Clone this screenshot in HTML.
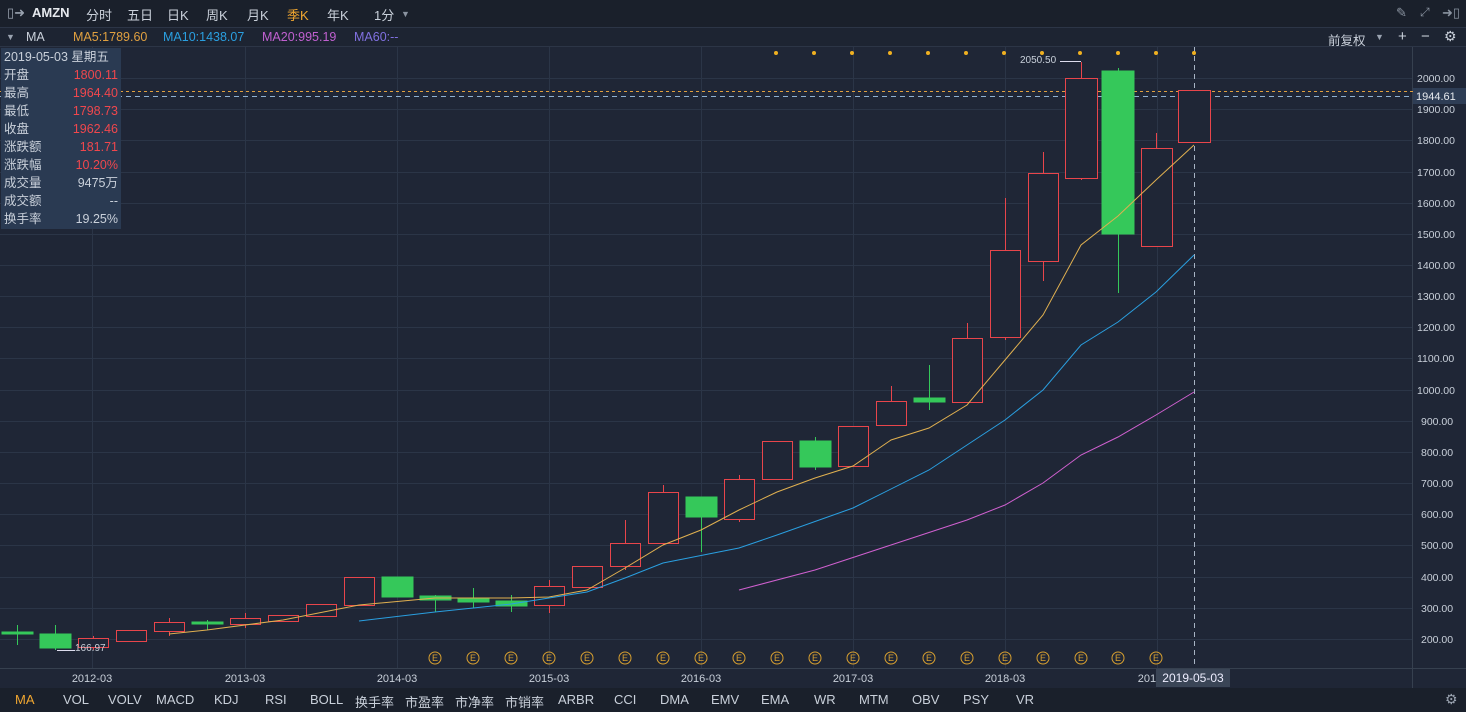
<!DOCTYPE html>
<html><head><meta charset="utf-8"><style>
*{margin:0;padding:0;box-sizing:border-box}
body{width:1466px;height:712px;background:#1f2636;font-family:"Liberation Sans","Noto Sans CJK SC",sans-serif;overflow:hidden;position:relative;color:#c9d0da}
.top{position:absolute;left:0;top:0;width:1466px;height:27px;background:#1a202b;font-size:13px}
.top span{position:absolute;top:5px}
.mabar{position:absolute;left:0;top:27px;width:1466px;height:20px;background:#1d2432;border-top:1px solid #2c3546;border-bottom:1px solid #2c3546;font-size:12.5px}
.mabar span{position:absolute;top:2px}
.info{position:absolute;left:1px;top:48px;width:120px;height:181px;background:#2a3a52;font-size:12.5px}
.info div{height:18px;line-height:18px;position:relative;padding-left:3px;color:#c9d0da}
.info b{font-weight:normal;position:absolute;right:3px;top:0}
.r{color:#f0474d}
.bot{position:absolute;left:0;top:688px;width:1466px;height:24px;background:#1a202b;font-size:13px}
.bot span{position:absolute;top:4px}
</style></head><body>
<div class="top">
<span style="left:7px;color:#9aa3b0">▯➜</span>
<span style="left:32px;font-weight:bold;color:#e6e9ee">AMZN</span>
<span style="left:86px">分时</span><span style="left:127px">五日</span><span style="left:167px">日K</span><span style="left:206px">周K</span><span style="left:247px">月K</span><span style="left:287px;color:#f0a630">季K</span><span style="left:327px">年K</span><span style="left:374px">1分</span><span style="left:401px;font-size:9px;top:9px;color:#8a93a0">▼</span>
<span style="left:1396px;color:#8a93a0">✎</span><span style="left:1420px;color:#8a93a0;font-size:12px">⤢</span><span style="left:1442px;color:#8a93a0">➜▯</span>
</div>
<div class="mabar">
<span style="left:6px;font-size:9px;top:4px;color:#9aa3b0">▼</span>
<span style="left:26px">MA</span>
<span style="left:73px;color:#e0a040">MA5:1789.60</span>
<span style="left:163px;color:#2a9fe0">MA10:1438.07</span>
<span style="left:262px;color:#c060d0">MA20:995.19</span>
<span style="left:354px;color:#8070e0">MA60:--</span>
<span style="left:1328px">前复权</span><span style="left:1375px;font-size:9px;top:4px;color:#9aa3b0">▼</span>
<span style="left:1398px;font-size:15px;top:0">+</span><span style="left:1421px;font-size:15px;top:0">−</span><span style="left:1444px;font-size:14px;top:0">⚙</span>
</div>
<svg style="position:absolute;left:0;top:47px" width="1466" height="641" viewBox="0 47 1466 641">
<g stroke="#2b3547" stroke-width="1">
<line x1="0" y1="78.5" x2="1412" y2="78.5"/><line x1="0" y1="109.5" x2="1412" y2="109.5"/><line x1="0" y1="140.5" x2="1412" y2="140.5"/><line x1="0" y1="172.5" x2="1412" y2="172.5"/><line x1="0" y1="203.5" x2="1412" y2="203.5"/><line x1="0" y1="234.5" x2="1412" y2="234.5"/><line x1="0" y1="265.5" x2="1412" y2="265.5"/><line x1="0" y1="296.5" x2="1412" y2="296.5"/><line x1="0" y1="327.5" x2="1412" y2="327.5"/><line x1="0" y1="358.5" x2="1412" y2="358.5"/><line x1="0" y1="390.5" x2="1412" y2="390.5"/><line x1="0" y1="421.5" x2="1412" y2="421.5"/><line x1="0" y1="452.5" x2="1412" y2="452.5"/><line x1="0" y1="483.5" x2="1412" y2="483.5"/><line x1="0" y1="514.5" x2="1412" y2="514.5"/><line x1="0" y1="545.5" x2="1412" y2="545.5"/><line x1="0" y1="577.5" x2="1412" y2="577.5"/><line x1="0" y1="608.5" x2="1412" y2="608.5"/><line x1="0" y1="639.5" x2="1412" y2="639.5"/>
<line x1="92.5" y1="47" x2="92.5" y2="668"/><line x1="245.5" y1="47" x2="245.5" y2="668"/><line x1="397.5" y1="47" x2="397.5" y2="668"/><line x1="549.5" y1="47" x2="549.5" y2="668"/><line x1="701.5" y1="47" x2="701.5" y2="668"/><line x1="853.5" y1="47" x2="853.5" y2="668"/><line x1="1005.5" y1="47" x2="1005.5" y2="668"/><line x1="1157.5" y1="47" x2="1157.5" y2="668"/>
<line x1="0" y1="668.5" x2="1466" y2="668.5" stroke="#36404f"/>
<line x1="1412.5" y1="47" x2="1412.5" y2="688" stroke="#36404f"/>
</g>
<line x1="0" y1="91.5" x2="1466" y2="91.5" stroke="#e0a040" stroke-dasharray="3,3"/>
<line x1="0" y1="96.5" x2="1412" y2="96.5" stroke="#8fb0d0" stroke-dasharray="5,4"/>
<line x1="1194.5" y1="47" x2="1194.5" y2="668" stroke="#a8b4c4" stroke-dasharray="5,4"/>
<g stroke="#e8454b" fill="#1f2636" stroke-width="1">
<line x1="93.5" y1="636" x2="93.5" y2="650"/><rect x="78.5" y="638.5" width="30" height="9"/>
<rect x="116.5" y="630.5" width="30" height="11"/>
<line x1="169.5" y1="618" x2="169.5" y2="636"/><rect x="154.5" y="622.5" width="30" height="9"/>
<line x1="245.5" y1="613" x2="245.5" y2="628"/><rect x="230.5" y="618.5" width="30" height="6"/>
<rect x="268.5" y="615.5" width="30" height="6"/>
<rect x="306.5" y="604.5" width="30" height="12"/>
<rect x="344.5" y="577.5" width="30" height="28"/>
<line x1="549.5" y1="580" x2="549.5" y2="613"/><rect x="534.5" y="586.5" width="30" height="19"/>
<rect x="572.5" y="566.5" width="30" height="21"/>
<line x1="625.5" y1="520" x2="625.5" y2="570"/><rect x="610.5" y="543.5" width="30" height="23"/>
<line x1="663.5" y1="485" x2="663.5" y2="545"/><rect x="648.5" y="492.5" width="30" height="51"/>
<line x1="739.5" y1="475" x2="739.5" y2="522"/><rect x="724.5" y="479.5" width="30" height="40"/>
<rect x="762.5" y="441.5" width="30" height="38"/>
<rect x="838.5" y="426.5" width="30" height="40"/>
<line x1="891.5" y1="386" x2="891.5" y2="401"/><rect x="876.5" y="401.5" width="30" height="24"/>
<line x1="967.5" y1="323" x2="967.5" y2="338"/><rect x="952.5" y="338.5" width="30" height="64"/>
<line x1="1005.5" y1="198" x2="1005.5" y2="340"/><rect x="990.5" y="250.5" width="30" height="87"/>
<line x1="1043.5" y1="152" x2="1043.5" y2="281"/><rect x="1028.5" y="173.5" width="30" height="88"/>
<line x1="1081.5" y1="62" x2="1081.5" y2="180"/><rect x="1065.5" y="78.5" width="32" height="100"/>
<line x1="1156.5" y1="133" x2="1156.5" y2="148"/><rect x="1141.5" y="148.5" width="31" height="98"/>
<rect x="1178.5" y="90.5" width="32" height="52"/>
</g>
<g fill="#35c85a" stroke="#35c85a">
<line x1="17.5" y1="625" x2="17.5" y2="645"/><rect x="2" y="632" width="31" height="2"/>
<line x1="55.5" y1="625" x2="55.5" y2="650"/><rect x="40" y="634" width="31" height="14"/>
<line x1="207.5" y1="620" x2="207.5" y2="630"/><rect x="192" y="622" width="31" height="2"/>
<rect x="382" y="577" width="31" height="20"/>
<line x1="435.5" y1="595" x2="435.5" y2="612"/><rect x="420" y="596" width="31" height="4"/>
<line x1="473.5" y1="588" x2="473.5" y2="608"/><rect x="458" y="599" width="31" height="3"/>
<line x1="511.5" y1="595" x2="511.5" y2="612"/><rect x="496" y="601" width="31" height="5"/>
<line x1="701.5" y1="517" x2="701.5" y2="552"/><rect x="686" y="497" width="31" height="20"/>
<line x1="815.5" y1="437" x2="815.5" y2="470"/><rect x="800" y="441" width="31" height="26"/>
<line x1="929.5" y1="365" x2="929.5" y2="410"/><rect x="914" y="398" width="31" height="4"/>
<line x1="1118.5" y1="68" x2="1118.5" y2="293"/><rect x="1102" y="71" width="32" height="163"/>
</g>
<polyline fill="none" stroke="#e0b050" stroke-width="1" points="169,634 207,630 283,620 359,605 435,598 511,598 549,597 587,590 625,568 663,545 701,530 739,510 777,492 815,478 853,466 891,440 929,428 967,405 1005,360 1043,315 1081,245 1118,216 1156,180 1194,145"/>
<polyline fill="none" stroke="#2a9fe0" stroke-width="1" points="359,621 435,612 511,604 587,592 625,578 663,563 739,548 777,535 853,508 929,470 1005,420 1043,390 1081,345 1118,322 1156,292 1194,255"/>
<polyline fill="none" stroke="#d060d0" stroke-width="1" points="739,590 815,570 891,545 967,520 1005,505 1043,483 1081,455 1118,437 1156,415 1194,392"/>
<g fill="#f0b020"><circle cx="776" cy="53" r="2"/><circle cx="814" cy="53" r="2"/><circle cx="852" cy="53" r="2"/><circle cx="890" cy="53" r="2"/><circle cx="928" cy="53" r="2"/><circle cx="966" cy="53" r="2"/><circle cx="1004" cy="53" r="2"/><circle cx="1042" cy="53" r="2"/><circle cx="1080" cy="53" r="2"/><circle cx="1118" cy="53" r="2"/><circle cx="1156" cy="53" r="2"/><circle cx="1194" cy="53" r="2"/></g>
<g fill="none" stroke="#d8a030">
<circle cx="435" cy="658" r="6"/><circle cx="473" cy="658" r="6"/><circle cx="511" cy="658" r="6"/><circle cx="549" cy="658" r="6"/><circle cx="587" cy="658" r="6"/><circle cx="625" cy="658" r="6"/><circle cx="663" cy="658" r="6"/><circle cx="701" cy="658" r="6"/><circle cx="739" cy="658" r="6"/><circle cx="777" cy="658" r="6"/><circle cx="815" cy="658" r="6"/><circle cx="853" cy="658" r="6"/><circle cx="891" cy="658" r="6"/><circle cx="929" cy="658" r="6"/><circle cx="967" cy="658" r="6"/><circle cx="1005" cy="658" r="6"/><circle cx="1043" cy="658" r="6"/><circle cx="1081" cy="658" r="6"/><circle cx="1118" cy="658" r="6"/><circle cx="1156" cy="658" r="6"/>
</g>
<g fill="#d8a030" font-size="9" font-family="Liberation Sans" text-anchor="middle">
<text x="435" y="661">E</text><text x="473" y="661">E</text><text x="511" y="661">E</text><text x="549" y="661">E</text><text x="587" y="661">E</text><text x="625" y="661">E</text><text x="663" y="661">E</text><text x="701" y="661">E</text><text x="739" y="661">E</text><text x="777" y="661">E</text><text x="815" y="661">E</text><text x="853" y="661">E</text><text x="891" y="661">E</text><text x="929" y="661">E</text><text x="967" y="661">E</text><text x="1005" y="661">E</text><text x="1043" y="661">E</text><text x="1081" y="661">E</text><text x="1118" y="661">E</text><text x="1156" y="661">E</text>
</g>
<line x1="1060" y1="61.5" x2="1081" y2="61.5" stroke="#dde"/>
<text x="1020" y="63" fill="#c9d0da" font-size="10" font-family="Liberation Sans">2050.50</text>
<line x1="57" y1="650.5" x2="75" y2="650.5" stroke="#dde"/>
<text x="75" y="651" fill="#c9d0da" font-size="10" font-family="Liberation Sans">166.97</text>
<g fill="#c9d0da" font-size="10.5" font-family="Liberation Sans">
<text x="1417" y="82">2000.00</text><text x="1417" y="113">1900.00</text><text x="1417" y="144">1800.00</text><text x="1417" y="176">1700.00</text><text x="1417" y="207">1600.00</text><text x="1417" y="238">1500.00</text><text x="1417" y="269">1400.00</text><text x="1417" y="300">1300.00</text><text x="1417" y="331">1200.00</text><text x="1417" y="362">1100.00</text><text x="1417" y="394">1000.00</text><text x="1421" y="425">900.00</text><text x="1421" y="456">800.00</text><text x="1421" y="487">700.00</text><text x="1421" y="518">600.00</text><text x="1421" y="549">500.00</text><text x="1421" y="581">400.00</text><text x="1421" y="612">300.00</text><text x="1421" y="643">200.00</text>
</g>
<rect x="1413" y="88" width="53" height="16" fill="#2e3d55"/>
<text x="1416" y="100" fill="#e6e9ee" font-size="11" font-family="Liberation Sans">1944.61</text>
<g fill="#c9d0da" font-size="11" font-family="Liberation Sans" text-anchor="middle">
<text x="92" y="682">2012-03</text><text x="245" y="682">2013-03</text><text x="397" y="682">2014-03</text><text x="549" y="682">2015-03</text><text x="701" y="682">2016-03</text><text x="853" y="682">2017-03</text><text x="1005" y="682">2018-03</text><text x="1150" y="682">2019</text>
</g>
<rect x="1156" y="669" width="74" height="18" fill="#3a4556"/>
<text x="1193" y="682" fill="#eef" font-size="12" font-family="Liberation Sans" text-anchor="middle">2019-05-03</text>
</svg>
<div class="info">
<div>2019-05-03 星期五</div>
<div>开盘<b class="r">1800.11</b></div>
<div>最高<b class="r">1964.40</b></div>
<div>最低<b class="r">1798.73</b></div>
<div>收盘<b class="r">1962.46</b></div>
<div>涨跌额<b class="r">181.71</b></div>
<div>涨跌幅<b class="r">10.20%</b></div>
<div>成交量<b>9475万</b></div>
<div>成交额<b>--</b></div>
<div>换手率<b>19.25%</b></div>
</div>
<div class="bot">
<span style="left:15px;color:#f0a630">MA</span><span style="left:63px">VOL</span><span style="left:108px">VOLV</span><span style="left:156px">MACD</span><span style="left:214px">KDJ</span><span style="left:265px">RSI</span><span style="left:310px">BOLL</span><span style="left:355px">换手率</span><span style="left:405px">市盈率</span><span style="left:455px">市净率</span><span style="left:505px">市销率</span><span style="left:558px">ARBR</span><span style="left:614px">CCI</span><span style="left:660px">DMA</span><span style="left:711px">EMV</span><span style="left:761px">EMA</span><span style="left:814px">WR</span><span style="left:859px">MTM</span><span style="left:912px">OBV</span><span style="left:963px">PSY</span><span style="left:1016px">VR</span>
<span style="left:1445px;color:#9aa3b0;font-size:14px;top:3px">⚙</span>
</div>
</body></html>
